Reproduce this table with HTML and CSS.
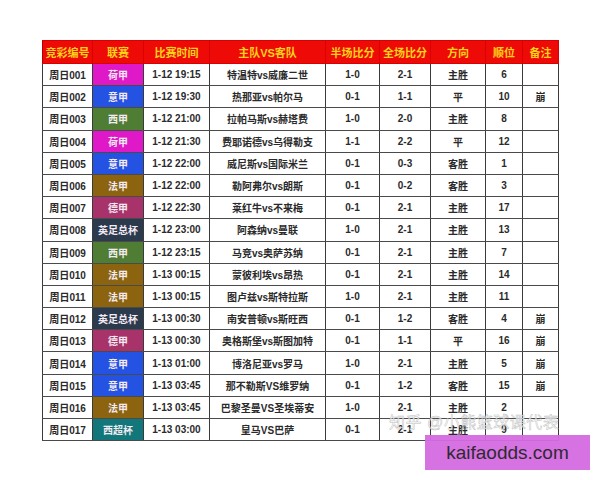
FILE: index.html
```html
<!DOCTYPE html>
<html lang="zh">
<head>
<meta charset="utf-8">
<link rel="stylesheet" href="styles.css">
</head>
<body>
<div class="page">
<table class="sheet">
<colgroup>
<col style="width:50px"><col style="width:51px"><col style="width:66px"><col style="width:116px"><col style="width:54px"><col style="width:51px"><col style="width:55px"><col style="width:37px"><col style="width:36px">
</colgroup>
<thead>
<tr><th>竞彩编号</th><th>联赛</th><th>比赛时间</th><th>主队VS客队</th><th>半场比分</th><th>全场比分</th><th>方向</th><th>顺位</th><th>备注</th></tr>
</thead>
<tbody>
<tr><td>周日001</td><td class="lg ere">荷甲</td><td>1-12 19:15</td><td>特温特vs威廉二世</td><td>1-0</td><td>2-1</td><td>主胜</td><td>6</td><td></td></tr>
<tr><td>周日002</td><td class="lg sa">意甲</td><td>1-12 19:30</td><td>热那亚vs帕尔马</td><td>0-1</td><td>1-1</td><td>平</td><td>10</td><td>崩</td></tr>
<tr><td>周日003</td><td class="lg liga">西甲</td><td>1-12 21:00</td><td>拉帕马斯vs赫塔费</td><td>1-0</td><td>2-0</td><td>主胜</td><td>8</td><td></td></tr>
<tr><td>周日004</td><td class="lg ere">荷甲</td><td>1-12 21:30</td><td>费耶诺德vs乌得勒支</td><td>1-1</td><td>2-2</td><td>平</td><td>12</td><td></td></tr>
<tr><td>周日005</td><td class="lg sa">意甲</td><td>1-12 22:00</td><td>威尼斯vs国际米兰</td><td>0-1</td><td>0-3</td><td>客胜</td><td>1</td><td></td></tr>
<tr><td>周日006</td><td class="lg l1">法甲</td><td>1-12 22:00</td><td>勒阿弗尔vs朗斯</td><td>0-1</td><td>0-2</td><td>客胜</td><td>3</td><td></td></tr>
<tr><td>周日007</td><td class="lg bl">德甲</td><td>1-12 22:30</td><td>莱红牛vs不来梅</td><td>0-1</td><td>2-1</td><td>主胜</td><td>17</td><td></td></tr>
<tr><td>周日008</td><td class="lg fa">英足总杯</td><td>1-12 23:00</td><td>阿森纳vs曼联</td><td>1-0</td><td>2-1</td><td>主胜</td><td>13</td><td></td></tr>
<tr><td>周日009</td><td class="lg liga">西甲</td><td>1-12 23:15</td><td>马竞vs奥萨苏纳</td><td>0-1</td><td>2-1</td><td>主胜</td><td>7</td><td></td></tr>
<tr><td>周日010</td><td class="lg l1">法甲</td><td>1-13 00:15</td><td>蒙彼利埃vs昂热</td><td>0-1</td><td>2-1</td><td>主胜</td><td>14</td><td></td></tr>
<tr><td>周日011</td><td class="lg l1">法甲</td><td>1-13 00:15</td><td>图卢兹vs斯特拉斯</td><td>1-0</td><td>2-1</td><td>主胜</td><td>11</td><td></td></tr>
<tr><td>周日012</td><td class="lg fa">英足总杯</td><td>1-13 00:30</td><td>南安普顿vs斯旺西</td><td>0-1</td><td>1-2</td><td>客胜</td><td>4</td><td>崩</td></tr>
<tr><td>周日013</td><td class="lg bl">德甲</td><td>1-13 00:30</td><td>奥格斯堡vs斯图加特</td><td>0-1</td><td>1-1</td><td>平</td><td>16</td><td>崩</td></tr>
<tr><td>周日014</td><td class="lg sa">意甲</td><td>1-13 01:00</td><td>博洛尼亚vs罗马</td><td>1-0</td><td>2-1</td><td>主胜</td><td>5</td><td>崩</td></tr>
<tr><td>周日015</td><td class="lg sa">意甲</td><td>1-13 03:45</td><td>那不勒斯VS维罗纳</td><td>0-1</td><td>1-2</td><td>客胜</td><td>15</td><td>崩</td></tr>
<tr><td>周日016</td><td class="lg l1">法甲</td><td>1-13 03:45</td><td>巴黎圣曼VS圣埃蒂安</td><td>1-0</td><td>2-1</td><td>主胜</td><td>2</td><td></td></tr>
<tr><td>周日017</td><td class="lg scup">西超杯</td><td>1-13 03:00</td><td>皇马VS巴萨</td><td>0-1</td><td>2-1</td><td>主胜</td><td>9</td><td></td></tr>
</tbody>
</table>
<div class="watermark">知乎 @小熊篮球课代表</div>
<div class="site">kaifaodds.com</div>
</div>
</body>
</html>
```
FILE: styles.css
```css
html, body {
  margin: 0;
  padding: 0;
  background: #ffffff;
}
.page {
  position: relative;
  width: 600px;
  height: 480px;
  padding: 40px 0 0 42px;
  box-sizing: border-box;
  font-family: "Liberation Sans", "Noto Sans CJK SC", sans-serif;
}
.sheet {
  border-collapse: collapse;
  table-layout: fixed;
  width: 516px;
}
.sheet th {
  background: #ee0a06;
  color: #ffd21a;
  font-size: 11px;
  font-weight: bold;
  height: 22px;
  padding: 0;
  text-align: center;
  border: 1px solid #d80000;
  border-left-color: #b00000;
}
.sheet td {
  height: 21.2px;
  padding: 0;
  text-align: center;
  font-size: 10px;
  font-weight: bold;
  color: #2a2a2a;
  border: 1px solid #4a4a4a;
  border-left: 1.5px solid #3a3a3a;
  border-right: 1.5px solid #3a3a3a;
  white-space: nowrap;
}
.sheet td.lg {
  color: #f4eaf2;
}
.ere { background: #df19c8; }
.sa { background: #2452e2; }
.liga { background: #4f7d34; }
.l1 { background: #8c6410; }
.bl { background: #a8336a; }
.fa { background: #2c3a4e; }
.scup { background: #12777a; }
.watermark {
  position: absolute;
  left: 389px;
  top: 409px;
  font-size: 16px;
  letter-spacing: 0.5px;
  color: rgba(255, 255, 255, 0.8);
  -webkit-text-stroke: 0.5px rgba(160, 160, 160, 0.7);
  white-space: nowrap;
}
.site {
  position: absolute;
  left: 425px;
  top: 435px;
  width: 165px;
  height: 35px;
  background: rgba(212, 106, 224, 0.95);
  color: #2e2a30;
  font-family: "Liberation Sans", sans-serif;
  font-size: 19px;
  line-height: 35px;
  text-align: center;
}
```
